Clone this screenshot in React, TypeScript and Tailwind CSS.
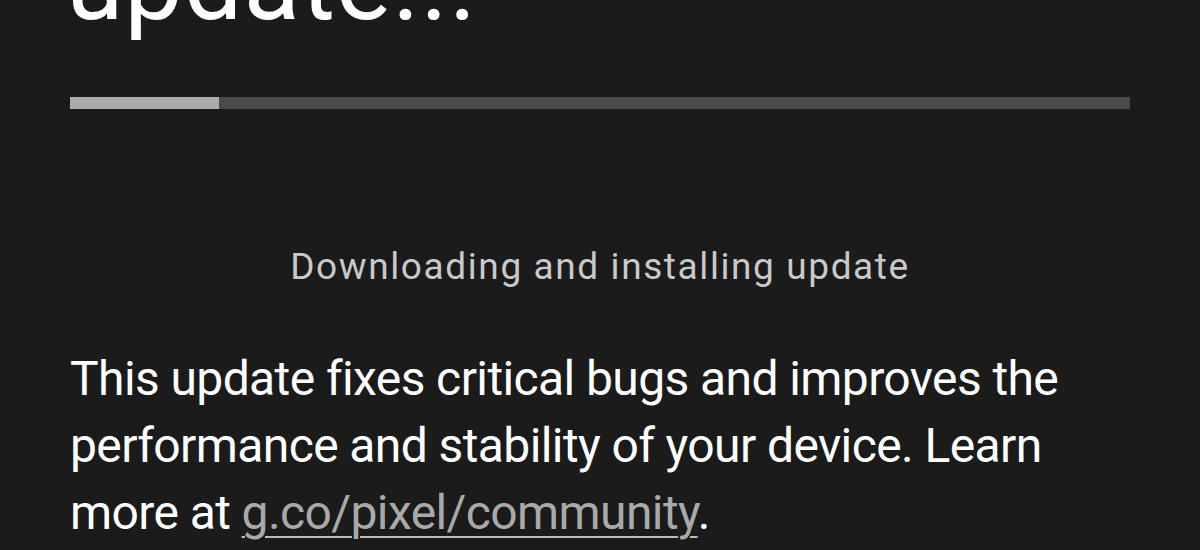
const App: React.FC = () => {
  return (
    <div className="w-[1200px] h-[550px] overflow-hidden bg-[#1b1b1b] px-[70px] font-['Roboto',sans-serif]">
      <h1 className="mt-[-68px] ml-[-4px] text-[104px] leading-none text-white font-normal tracking-[1px]">update...</h1>
      <div className="mt-[61px] flex h-[12px] w-full bg-[#4a4a4a]">
        <div className="h-full w-[149px] bg-[#ababab]" />
      </div>
      <p className="mt-[138px] text-center text-[37px] leading-[40px] tracking-[1.6px] text-[#c9c9c9]">Downloading and installing update</p>
      <p className="mt-[58px] text-[48px] leading-[67px] tracking-[-0.6px] text-white">
        This update fixes critical bugs and improves the performance and stability of your device. Learn more at{' '}
        <span className="text-[#a9a9a9] underline decoration-[2px] decoration-[#bdbdbd] underline-offset-[7px]">g.co/pixel/community</span>.
      </p>
    </div>
  )
}
export default App;
